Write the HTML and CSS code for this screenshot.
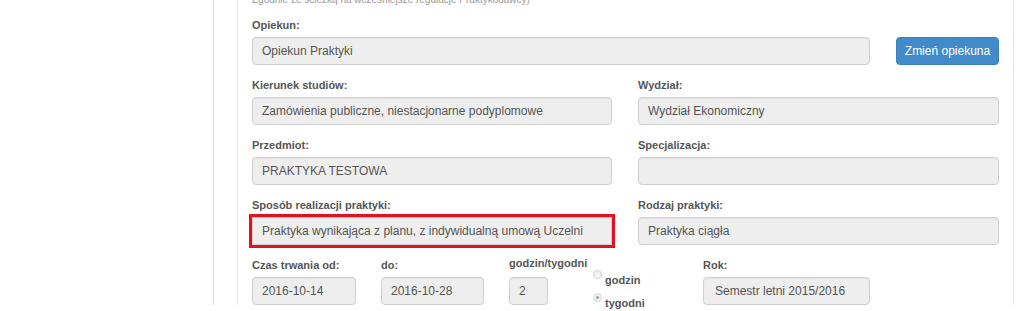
FILE: index.html
```html
<!DOCTYPE html>
<html lang="pl">
<head>
    <meta charset="UTF-8">
    <meta name="viewport" content="width=device-width, initial-scale=1.0">
    <title>Praktyka</title>
    <link rel="stylesheet" href="styles.css">
</head>
<body>

    <div class="page">
        <div class="wrapper">
            <div class="panel">

                <p class="note">Zgodnie ze ścieżką na wcześniejsze regulacje Praktykodawcy)</p>

                <!-- Opiekun -->
                <div class="form-group">
                    <label>Opiekun:</label>
                    <div class="guardian-row">
                        <div class="field">Opiekun Praktyki</div>
                        <button class="btn-primary">Zmień opiekuna</button>
                    </div>
                </div>

                <!-- Two columns -->
                <div class="two-cols">
                    <div class="form-group">
                        <label>Kierunek studiów:</label>
                        <div class="field">Zamówienia publiczne, niestacjonarne podyplomowe</div>
                    </div>
                    <div class="form-group">
                        <label>Wydział:</label>
                        <div class="field">Wydział Ekonomiczny</div>
                    </div>

                    <div class="form-group">
                        <label>Przedmiot:</label>
                        <div class="field">PRAKTYKA TESTOWA</div>
                    </div>
                    <div class="form-group">
                        <label>Specjalizacja:</label>
                        <div class="field"></div>
                    </div>

                    <div class="form-group">
                        <label>Sposób realizacji praktyki:</label>
                        <div class="field highlighted">Praktyka wynikająca z planu, z indywidualną umową Uczelni</div>
                    </div>
                    <div class="form-group">
                        <label>Rodzaj praktyki:</label>
                        <div class="field">Praktyka ciągła</div>
                    </div>
                </div>

                <!-- Duration -->
                <div class="duration-row">
                    <div>
                        <label>Czas trwania od:</label>
                        <div class="field date">2016-10-14</div>
                    </div>
                    <div>
                        <label>do:</label>
                        <div class="field date-to">2016-10-28</div>
                    </div>
                    <div>
                        <label class="label-up">godzin/tygodni</label>
                        <div class="field hours">2</div>
                    </div>
                    <div class="radios">
                        <div class="radio"><span class="radio-dot"></span><span class="radio-text">godzin</span></div>
                        <div class="radio"><span class="radio-dot checked"></span><span class="radio-text">tygodni</span></div>
                    </div>
                    <div>
                        <label>Rok:</label>
                        <div class="field year">Semestr letni 2015/2016</div>
                    </div>
                </div>

            </div>
        </div>
    </div>

</body>
</html>
```

FILE: styles.css
```css
/* General */
body {
    margin: 0;
    padding: 0;
    background: white;
    font-family: "Liberation Sans", Arial, sans-serif;
    color: #555;
}

.page {
    padding-left: 213px;
    height: 311px;
    overflow: hidden;
}

.wrapper {
    border-left: 1px solid #dcdcdc;
    padding-left: 23px;
    height: 100%;
}

.panel {
    width: 777px;
    box-sizing: border-box;
    height: 100%;
    border-left: 1px solid #e8e8e8;
    border-right: 1px solid #e4e4e4;
    padding: 0 14px;
}

.note {
    margin: -6px 0 0 0;
    font-size: 10px;
    line-height: 12px;
    color: #999;
}

/* Form */
.form-group {
    margin-bottom: 12px;
}

label {
    display: block;
    font-size: 11px;
    font-weight: bold;
    line-height: 16px;
    margin-bottom: 4px;
    color: #555;
}

.note + .form-group {
    margin-top: 11px;
}

.field {
    box-sizing: border-box;
    height: 28px;
    line-height: 26px;
    padding: 0 9px;
    font-size: 12px;
    color: #555;
    background: #eeeeee;
    border: 1px solid #cfcfcf;
    border-radius: 4px;
    box-shadow: inset 0 1px 1px rgba(0, 0, 0, 0.05);
    white-space: nowrap;
    overflow: hidden;
}

.field.highlighted {
    border-radius: 0;
    outline: 3px solid #e3111f;
    outline-offset: 0;
}

.guardian-row {
    display: flex;
    gap: 26px;
}

.guardian-row .field {
    flex: 1;
}

.btn-primary {
    width: 103px;
    height: 28px;
    padding: 0;
    font-family: inherit;
    font-size: 12px;
    color: white;
    background: #428bca;
    border: 1px solid #3a80c0;
    border-radius: 4px;
}

.two-cols {
    display: grid;
    grid-template-columns: 360px 361px;
    column-gap: 26px;
}

/* Duration row */
.duration-row {
    display: grid;
    grid-template-columns: 129px 128px 81px 113px 167px;
}

.duration-row label {
    white-space: nowrap;
}

.label-up {
    position: relative;
    top: -2px;
}

.date {
    width: 104px;
}

.date-to {
    width: 103px;
}

.hours {
    width: 39px;
}

.year {
    width: 167px;
    padding-left: 11px;
}

.radios {
    padding-top: 12px;
}

.radio {
    display: flex;
    height: 23px;
}

.radio-dot {
    width: 9px;
    height: 9px;
    margin: 1px 3px 0 3px;
    border: 1px solid #d4d4d4;
    border-radius: 50%;
    background: #f3f3f3;
    box-sizing: border-box;
    position: relative;
}

.radio-dot.checked::after {
    content: "";
    position: absolute;
    left: 2px;
    top: 2px;
    width: 3px;
    height: 3px;
    border-radius: 50%;
    background: #9a9a9a;
}

.radio-text {
    font-size: 11px;
    font-weight: bold;
    line-height: 16px;
    padding-top: 3px;
}
```
